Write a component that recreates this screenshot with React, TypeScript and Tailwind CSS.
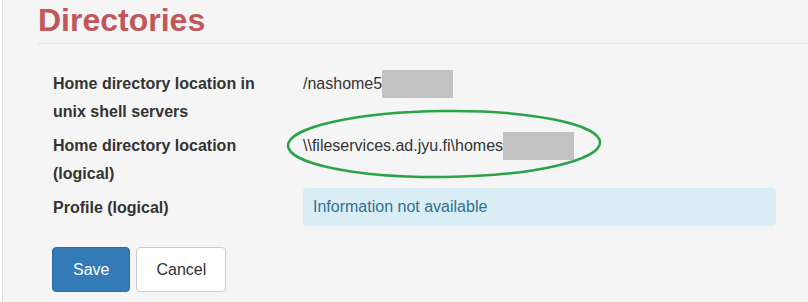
const rows = [
  { label: ['Home directory location in', 'unix shell servers'], value: '/nashome5' },
  { label: ['Home directory location', '(logical)'], value: '\\\\fileservices.ad.jyu.fi\\homes' },
]

export default function App() {
  return (
    <div className="h-[302px] w-[808px] overflow-hidden bg-white pl-[2px] font-['Liberation_Sans',Arial,sans-serif] text-[16px] text-[#333]">
      <div className="relative h-full border-l border-[#e3e3e3] bg-[#f5f5f5] pl-[35px]">
        <div className="border-b border-[#e2e2e2] pb-[5px] pt-[3px]">
          <h1 className="text-[32px] font-bold leading-[35px] text-[#c0575b]">Directories</h1>
        </div>

        <div className="mt-[26px] pl-[15px]">
          {rows.map((row, i) => (
            <div key={i} className={i > 0 ? 'mt-[6px] flex' : 'flex'}>
              <div className="w-[250px] font-bold leading-[28px]">
                {row.label.map((line) => (
                  <div key={line}>{line}</div>
                ))}
              </div>
              <div className="leading-[28px]">
                {row.value}
                <span className="inline-block h-[28px] w-[71px] bg-[#c2c2c2] align-top" />
              </div>
            </div>
          ))}

          <div className="flex">
            <div className="w-[250px] pt-[6px] font-bold leading-[28px]">Profile (logical)</div>
            <div className="w-[473px] rounded-[4px] bg-[#d9edf7] px-[10px] py-[5px] leading-[28px] text-[#31708f]">
              Information not available
            </div>
          </div>

          <div className="mt-[21px] flex gap-[6px] -ml-[1px]">
            <button className="h-[45px] rounded-[4px] border border-[#2e6da4] bg-[#337ab7] px-[20px] text-white">
              Save
            </button>
            <button className="h-[45px] rounded-[4px] border border-[#ccc] bg-white px-[19px] text-[#333]">
              Cancel
            </button>
          </div>
        </div>

        <svg className="absolute left-[279px] top-[107px]" width="324" height="74" viewBox="0 0 324 74">
          <ellipse
            cx="162"
            cy="37"
            rx="156"
            ry="33"
            fill="none"
            stroke="#2aa348"
            strokeWidth="2.5"
            transform="rotate(-0.6 162 37)"
          />
        </svg>
      </div>
    </div>
  )
}
